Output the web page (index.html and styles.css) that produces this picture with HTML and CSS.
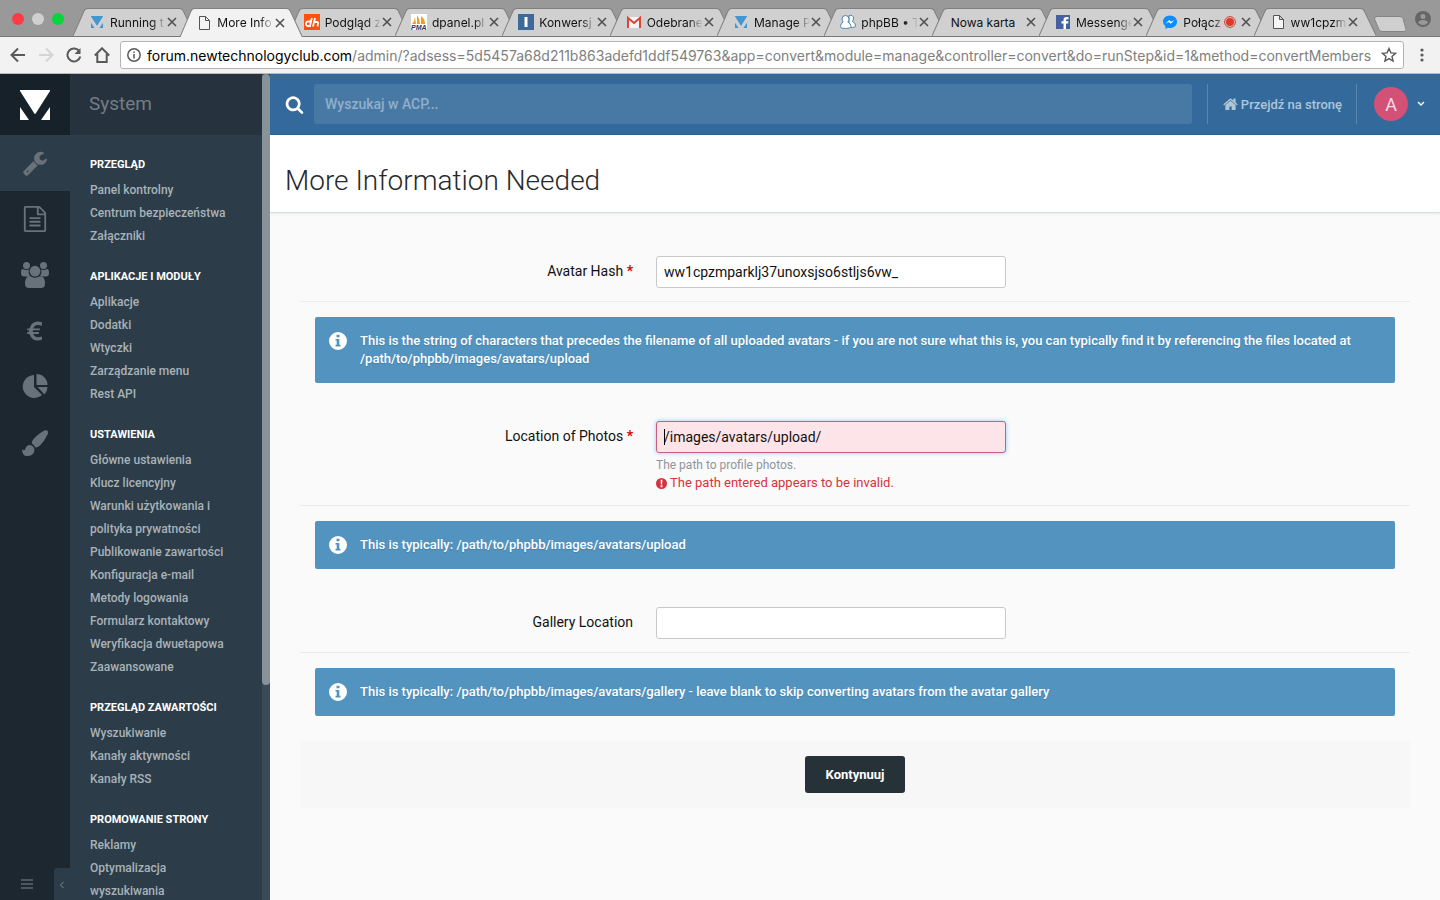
FILE: index.html
```html
<!DOCTYPE html>
<html lang="pl">
<head>
    <meta charset="UTF-8">
    <meta name="viewport" content="width=device-width, initial-scale=1.0">
    <title>More Information Needed</title>
    <link rel="stylesheet" href="styles.css">
</head>
<body>
    <!-- shared shapes -->
    <svg class="defs" aria-hidden="true">
        <symbol id="tab-shape" viewBox="0 0 122 28" preserveAspectRatio="none">
            <path d="M0 28L11 3Q12 .5 15 .5H106Q109 .5 110 3L122 28"/>
        </symbol>
        <symbol id="ips" viewBox="0 0 30 30">
            <path d="M0 0h30v1L16 23q-1 2-2 0L0 1zM0 17l9 13H0zM30 17l-9 13h9z"/>
        </symbol>
        <symbol id="page" viewBox="0 0 16 16">
            <path d="M3.500 1.500h6l4 4v9h-10zM9.500 1.500v4h4" fill="#f5f5f5" stroke="#555"/>
        </symbol>
        <symbol id="close" viewBox="0 0 10 10">
            <path d="M1 1l8 8M9 1L1 9" stroke="#505050" stroke-width="1.600" fill="none"/>
        </symbol>
        <symbol id="info" viewBox="0 0 18 18">
            <path fill-rule="evenodd" d="M9 0a9 9 0 1 1 0 18A9 9 0 0 1 9 0zM7.500 2.800v2.400h3V2.800zM6.500 7v1.600h1.200v4.200H6.500v1.700h5v-1.700h-1.200V7z"/>
        </symbol>
    </svg>

    <header class="browser">
        <div class="tabstrip">
            <div class="lights"><i class="red"></i><i class="grey"></i><i class="green"></i></div>
            <div class="tabs">
                <div class="tab"><svg class="shape"><use href="#tab-shape"/></svg><svg class="fav small"><use href="#ips" fill="#4296d2"/></svg><span>Running t</span><svg class="x"><use href="#close"/></svg></div>
                <div class="tab active"><svg class="shape"><use href="#tab-shape"/></svg><svg class="fav"><use href="#page"/></svg><span>More Info</span><svg class="x"><use href="#close"/></svg></div>
                <div class="tab"><svg class="shape"><use href="#tab-shape"/></svg><svg class="fav" viewBox="0 0 16 16"><path fill="#ff5010" d="M0 0h16v16H0z"/><path d="M6.500 7.500H3.800Q2.300 7.500 2 9.500T3.500 12H6L7.800 4M9 12.500L11 4M10 8h3q1.500 0 1 2l-.6 2.500" fill="none" stroke="#fff" stroke-width="1.800"/></svg><span>Podgląd z</span><svg class="x"><use href="#close"/></svg></div>
                <div class="tab"><svg class="shape"><use href="#tab-shape"/></svg><svg class="fav" viewBox="0 0 16 16"><path fill="#fff" d="M0 0h16v16H0z"/><path fill="#f49b1b" d="M1 10Q4 7 4 3l1 7zM6 10V1q3 4 3 9zM10 10V2q4 3 4 8z"/><text x="0" y="16" class="pma">PMA</text></svg><span>dpanel.pl</span><svg class="x"><use href="#close"/></svg></div>
                <div class="tab"><svg class="shape"><use href="#tab-shape"/></svg><svg class="fav" viewBox="0 0 16 16"><path fill="#3d6a98" d="M0 0h16v16H0z"/><path fill="#fff" d="M6.500 3h3v10h-3z"/></svg><span>Konwersj</span><svg class="x"><use href="#close"/></svg></div>
                <div class="tab"><svg class="shape"><use href="#tab-shape"/></svg><svg class="fav" viewBox="0 0 16 16"><path fill="#f4f4f4" d="M1 3h14v11H1z"/><path fill="none" stroke="#dc4437" stroke-width="2" d="M2 14V4l6 5 6-5v10"/></svg><span>Odebrane</span><svg class="x"><use href="#close"/></svg></div>
                <div class="tab"><svg class="shape"><use href="#tab-shape"/></svg><svg class="fav small"><use href="#ips" fill="#4296d2"/></svg><span>Manage P</span><svg class="x"><use href="#close"/></svg></div>
                <div class="tab"><svg class="shape"><use href="#tab-shape"/></svg><svg class="fav" viewBox="0 0 16 16"><g fill="#fff" stroke="#4c86a8"><path d="M9 1.500q4-1 4.500 2.500 0 2-1 3.500 3 1 3 4.500 0 1.500-3 1.500H9z"/><path d="M5.500 1.500Q9 1.500 9 5q0 2-1.200 3 3.200 1.500 3.200 4.500 0 2-5.500 2t-5-2Q.5 9.500 3.200 8 2 7 2 5q0-3.500 3.500-3.500z"/></g></svg><span>phpBB • T</span><svg class="x"><use href="#close"/></svg></div>
                <div class="tab"><svg class="shape"><use href="#tab-shape"/></svg><span>Nowa karta</span><svg class="x"><use href="#close"/></svg></div>
                <div class="tab"><svg class="shape"><use href="#tab-shape"/></svg><svg class="fav" viewBox="0 0 16 16"><path fill="#4460a0" d="M1 1h14v14H1z"/><path fill="#fff" d="M8.500 15V9.500h-2V7.300h2V6q0-3 3-3h2v2.200h-1.200q-1.300 0-1.300 1.200v.9h2.500l-.4 2.200H11V15z"/></svg><span>Messenge</span><svg class="x"><use href="#close"/></svg></div>
                <div class="tab"><svg class="shape"><use href="#tab-shape"/></svg><svg class="fav" viewBox="0 0 16 16"><path fill="#0a8dff" d="M8 1.500c4 0 7 2.800 7 6.200s-3 6.300-7 6.300q-1 0-2-.3L3.500 15v-2.500Q1 10.800 1 7.700C1 4.300 4 1.500 8 1.500z"/><path fill="#fff" d="M3.500 9.700L7.200 6l2 1.800 3.300-1.800L8.800 9.800 6.900 8z"/></svg><span>Połącz</span><svg class="rec" viewBox="0 0 12 12"><circle cx="6" cy="6" r="5.400" fill="none" stroke="#e0392b"/><circle cx="6" cy="6" r="4" fill="#e0392b"/></svg><svg class="x"><use href="#close"/></svg></div>
                <div class="tab"><svg class="shape"><use href="#tab-shape"/></svg><svg class="fav"><use href="#page"/></svg><span>ww1cpzm</span><svg class="x"><use href="#close"/></svg></div>
            </div>
            <svg class="newtab" viewBox="0 0 32 16"><path d="M3 .5h23q2 0 3 2l3 11q0 2-2 2H8q-2 0-3-2L.5 3Q.5.5 3 .5z" fill="#cfcfcf" stroke="#858585"/></svg>
            <svg class="profile" viewBox="0 0 16 16"><circle cx="8" cy="8" r="8" fill="#666"/><circle cx="8" cy="5.500" r="2.500" fill="#999"/><path d="M3 11.500q1-2.500 5-2.500t5 2.500Q11 14 8 14t-5-2.500z" fill="#999"/></svg>
        </div>
        <div class="toolbar">
            <svg class="nav" viewBox="0 0 16 16"><path d="M15 8H2M8 1.500L1.500 8 8 14.500"/></svg>
            <svg class="nav off" viewBox="0 0 16 16"><path d="M1 8h13M8 1.500L14.500 8 8 14.500"/></svg>
            <svg class="nav" viewBox="0 0 16 16"><path d="M13.500 4.500A6.500 6.500 0 1 0 14.300 9.500"/><path d="M14.500 1v6h-6z" fill="#5a5a5a" stroke="none"/></svg>
            <svg class="nav" viewBox="0 0 16 16"><path d="M.8 8.500L8 1.300l7.200 7.200M3.300 7v8h9.400V7"/></svg>
            <div class="address">
                <svg class="site" viewBox="0 0 14 14"><circle cx="7" cy="7" r="6.200"/><path d="M7 6v4.500M7 3.500V5"/></svg>
                <span class="url"><b>forum.newtechnologyclub.com</b>/admin/?adsess=5d5457a68d211b863adefd1ddf549763&amp;app=convert&amp;module=manage&amp;controller=convert&amp;do=runStep&amp;id=1&amp;method=convertMembers</span>
                <svg class="star" viewBox="0 0 16 16"><path d="M8 1.500l1.900 4.400 4.700.4-3.600 3.100 1.100 4.700L8 11.600l-4.100 2.500L5 9.400 1.400 6.300l4.700-.4z"/></svg>
            </div>
            <svg class="more" viewBox="0 0 4 14"><circle cx="2" cy="2" r="1.600"/><circle cx="2" cy="7" r="1.600"/><circle cx="2" cy="12" r="1.600"/></svg>
        </div>
    </header>

    <div class="app">
        <nav class="rail">
            <a class="logo" href="#" aria-label="ACP"><svg><use href="#ips" fill="#fff"/></svg></a>
            <a class="on" href="#" aria-label="System"><svg viewBox="0 0 1792 1792"><path d="M448 1472q0-26-19-45t-45-19-45 19-19 45 19 45 45 19 45-19 19-45zm644-420l-682 682q-37 37-90 37-52 0-91-37l-106-108q-38-36-38-90 0-53 38-91l681-681q39 98 114.500 173.500t173.500 114.500zm634-435q0 39-23 106-47 134-164.500 217.500t-258.500 83.500q-185 0-316.500-131.500t-131.500-316.500 131.500-316.500 316.500-131.500q58 0 121.500 16.500t107.500 46.500q16 11 16 28t-16 28l-293 169v224l193 107q5-3 79-48.500t135.500-81 70.500-35.500q15 0 23.500 10t8.500 25z"/></svg></a>
            <a href="#" aria-label="Zawartość"><svg viewBox="0 0 1792 1792"><path d="M1596 380q28 28 48 76t20 88v1152q0 40-28 68t-68 28h-1344q-40 0-68-28t-28-68v-1600q0-40 28-68t68-28h896q40 0 88 20t76 48zm-444-244v376h376q-10-29-22-41l-313-313q-12-12-41-22zm384 1528v-1024h-416q-40 0-68-28t-28-68v-416h-768v1536h1280zm-1024-864q0-14 9-23t23-9h704q14 0 23 9t9 23v64q0 14-9 23t-23 9h-704q-14 0-23-9t-9-23v-64zm736 224q14 0 23 9t9 23v64q0 14-9 23t-23 9h-704q-14 0-23-9t-9-23v-64q0-14 9-23t23-9h704zm0 256q14 0 23 9t9 23v64q0 14-9 23t-23 9h-704q-14 0-23-9t-9-23v-64q0-14 9-23t23-9h704z"/></svg></a>
            <a href="#" aria-label="Użytkownicy"><svg viewBox="0 0 28 26"><circle cx="5.500" cy="3.500" r="3.500"/><circle cx="22.500" cy="3.500" r="3.500"/><circle cx="14" cy="9.200" r="5.400"/><path d="M0 11q0-4 1.800-4 3.200 1.700 6 .5-.8 4.500 1.700 7H3q-3 0-3-3.500zM28 11q0-4-1.800-4-3.200 1.700-6 .5.8 4.500-1.700 7H25q3 0 3-3.500zM4 22q0-8 5-8 5 3.500 10 0 5 0 5 8 0 4-4 4H8q-4 0-4-4z"/></svg></a>
            <a href="#" aria-label="Commerce"><svg viewBox="-3 -1 30 30"><path d="M20 4v4q-8-3-10 3h8l-.6 2.200H9.500v2h7.300l-.6 2.200H10q2.500 5.600 10 3v3.800q-11 3.300-14.300-6.800H3v-2.200h2.200v-2H3V11h2.700Q9 .6 20 4z"/></svg></a>
            <a href="#" aria-label="Statystyki"><svg viewBox="0 0 26 26"><path d="M12 1v12l8 8A11.500 11.500 0 1 1 12 1zM14.500 0A11 11 0 0 1 25.500 11h-11zM15.500 13h10q0 4-3 7.500z"/></svg></a>
            <a href="#" aria-label="Wygląd"><svg viewBox="0 0 26 26"><path d="M25 .4q2 1 .5 4-3 6.500-7.500 11-2 2-4.600 2-1.500-3-3.600-4 0-2.500 2.200-4.800Q18 2.500 22.500.6 24-.2 25 .4zM7.500 15q4.500.5 5 5-.7 6-7.500 6-5 0-5-6.800 2.500 1.800 3 .3Q4.500 15 7.500 15z"/></svg></a>
            <div class="rail-foot">
                <svg class="bars" viewBox="0 0 12 10"><path d="M0 1h12M0 5h12M0 9h12"/></svg>
                <button type="button" class="collapse" aria-label="Zwiń"><svg viewBox="0 0 6 8"><path d="M4.500 1l-3 3 3 3"/></svg></button>
            </div>
        </nav>

        <aside class="menu">
            <h2>System</h2>
            <section>
                <h3>Przegląd</h3>
                <a href="#">Panel kontrolny</a>
                <a href="#">Centrum bezpieczeństwa</a>
                <a href="#">Załączniki</a>
            </section>
            <section>
                <h3>Aplikacje i moduły</h3>
                <a href="#">Aplikacje</a>
                <a href="#">Dodatki</a>
                <a href="#">Wtyczki</a>
                <a href="#">Zarządzanie menu</a>
                <a href="#">Rest API</a>
            </section>
            <section>
                <h3>Ustawienia</h3>
                <a href="#">Główne ustawienia</a>
                <a href="#">Klucz licencyjny</a>
                <a href="#">Warunki użytkowania i polityka prywatności</a>
                <a href="#">Publikowanie zawartości</a>
                <a href="#">Konfiguracja e-mail</a>
                <a href="#">Metody logowania</a>
                <a href="#">Formularz kontaktowy</a>
                <a href="#">Weryfikacja dwuetapowa</a>
                <a href="#">Zaawansowane</a>
            </section>
            <section>
                <h3>Przegląd zawartości</h3>
                <a href="#">Wyszukiwanie</a>
                <a href="#">Kanały aktywności</a>
                <a href="#">Kanały RSS</a>
            </section>
            <section>
                <h3>Promowanie strony</h3>
                <a href="#">Reklamy</a>
                <a href="#">Optymalizacja wyszukiwania</a>
            </section>
            <div class="scroll"><div class="thumb"></div></div>
        </aside>

        <main>
            <div class="topbar">
                <label for="search" aria-label="Szukaj"><svg viewBox="0 0 1792 1792"><path d="M1216 832q0-185-131.500-316.500t-316.500-131.500-316.500 131.500-131.500 316.500 131.500 316.500 316.500 131.500 316.500-131.500 131.500-316.500zm512 832q0 52-38 90t-90 38q-54 0-90-38l-343-342q-179 124-399 124-143 0-273.500-55.500t-225-150-150-225-55.500-273.500 55.500-273.500 150-225 225-150 273.500-55.500 273.500 55.500 225 150 150 225 55.500 273.500q0 220-124 399l343 343q37 37 37 90z"/></svg></label>
                <input type="text" id="search" placeholder="Wyszukaj w ACP...">
                <a class="site-link" href="#"><svg viewBox="64 192 1664 1344"><path d="M1472 992v480q0 26-19 45t-45 19h-384v-384h-256v384h-384q-26 0-45-19t-19-45v-480q0-1 .5-3t.5-3l575-474 575 474q1 2 1 6zm223-69l-62 74q-8 9-21 11h-3q-13 0-21-7l-692-577-692 577q-12 8-24 7-13-2-21-11l-62-74q-8-10-7-23.500t11-21.500l719-599q32-26 76-26t76 26l244 204v-195q0-14 9-23t23-9h192q14 0 23 9t9 23v408l219 182q10 8 11 21.500t-7 23.500z"/></svg>Przejdź na stronę</a>
                <a class="user" href="#"><span class="avatar">A</span><svg viewBox="0 0 8 6"><path d="M1 1l3 3 3-3"/></svg></a>
            </div>
            <div class="page-title"><h1>More Information Needed</h1></div>

            <form>
                <div class="row">
                    <label for="hash">Avatar Hash <em>*</em></label>
                    <div class="field"><input type="text" id="hash" value="ww1cpzmparklj37unoxsjso6stljs6vw_"></div>
                </div>
                <div class="message">
                    <svg><use href="#info"/></svg>
                    <p>This is the string of characters that precedes the filename of all uploaded avatars - if you are not sure what this is, you can typically find it by referencing the files located at /path/to/phpbb/images/avatars/upload</p>
                </div>
                <div class="row">
                    <label for="photos">Location of Photos <em>*</em></label>
                    <div class="field">
                        <input type="text" id="photos" class="invalid" value="/images/avatars/upload/">
                        <p class="hint">The path to profile photos.</p>
                        <p class="error"><svg viewBox="0 0 12 12"><path fill-rule="evenodd" d="M6 0a6 6 0 1 1 0 12A6 6 0 0 1 6 0zM5 2l.3 5h1.400L7 2zM5 8v2h2V8z"/></svg>The path entered appears to be invalid.</p>
                    </div>
                </div>
                <div class="message">
                    <svg><use href="#info"/></svg>
                    <p>This is typically: /path/to/phpbb/images/avatars/upload</p>
                </div>
                <div class="row">
                    <label for="gallery">Gallery Location</label>
                    <div class="field"><input type="text" id="gallery"></div>
                </div>
                <div class="message">
                    <svg><use href="#info"/></svg>
                    <p>This is typically: /path/to/phpbb/images/avatars/gallery - leave blank to skip converting avatars from the avatar gallery</p>
                </div>
                <div class="submit"><button type="submit">Kontynuuj</button></div>
            </form>
        </main>
    </div>
</body>
</html>
```

FILE: styles.css
```css
* {
    box-sizing: border-box;
}
body {
    margin: 0;
    height: 100vh;
    display: flex;
    flex-direction: column;
    overflow: hidden;
    font-family: Roboto, "Liberation Sans", sans-serif;
    font-size: 14px;
    color: #111;
    background: #fafafa;
}
h1, h2, h3, p {
    margin: 0;
}
a {
    text-decoration: none;
}
svg {
    flex: none;
}
.defs {
    position: absolute;
    width: 0;
    height: 0;
}

/* browser window */
.browser {
    flex: none;
    font-family: Inter, sans-serif;
    border-bottom: 1px solid #b8b8b8;
}
.tabstrip {
    display: flex;
    align-items: flex-end;
    height: 37px;
    padding: 0 9px 0 12px;
    background: #999;
    border-bottom: 1px solid #777;
}
.lights {
    flex: none;
    display: flex;
    gap: 8px;
    width: 61px;
    padding-bottom: 11px;
}
.lights i {
    width: 12px;
    height: 12px;
    border-radius: 50%;
}
.red {
    background: #fc3c44;
}
.grey {
    background: #d0d0d0;
}
.green {
    background: #07d53c;
}
.tabs {
    flex: 1;
    min-width: 0;
    display: flex;
    padding-right: 13px;
}
.tab {
    position: relative;
    flex: 1;
    min-width: 0;
    height: 28px;
    display: flex;
    align-items: center;
    padding: 0 3px 0 16px;
    font-size: 12px;
    color: #111;
    white-space: nowrap;
}
.tab .shape {
    position: absolute;
    left: 0;
    top: 0;
    width: calc(100% + 15px);
    height: 28px;
    fill: #d0d0d0;
    stroke: #808080;
}
.tab.active {
    z-index: 1;
    height: 29px;
    margin-bottom: -1px;
}
.tab.active .shape {
    height: 29px;
    fill: #f2f2f2;
}
.tab > :not(.shape) {
    position: relative;
}
.tab span {
    flex: 1;
    min-width: 0;
    margin-left: 5px;
    -webkit-mask-image: linear-gradient(to right, #000 75%, transparent);
    mask-image: linear-gradient(to right, #000 75%, transparent);
}
.tab .shape + span {
    margin-left: 3px;
    -webkit-mask-image: none;
    mask-image: none;
}
.fav {
    width: 16px;
    height: 16px;
}
.fav.small {
    width: 14px;
    height: 12px;
    margin: 0 1px;
}
.pma {
    font: italic bold 7px "Liberation Sans", sans-serif;
    fill: #333366;
}
.x {
    width: 10px;
    height: 10px;
    margin-left: 1px;
}
.rec {
    width: 12px;
    height: 12px;
    margin-right: 4px;
}
.newtab {
    width: 32px;
    height: 16px;
    margin-bottom: 4px;
}
.profile {
    width: 16px;
    height: 16px;
    margin: 0 0 9px 9px;
}
.toolbar {
    display: flex;
    align-items: center;
    height: 36px;
    padding: 0 16px 0 10px;
    background: #f2f2f2;
}
.nav {
    width: 16px;
    height: 16px;
    margin-right: 12px;
    fill: none;
    stroke: #5a5a5a;
    stroke-width: 2;
}
.nav.off {
    stroke: #d4d4d4;
}
.address {
    flex: 1;
    min-width: 0;
    display: flex;
    align-items: center;
    height: 28px;
    margin: 0 16px 0 -2px;
    padding: 0 6px;
    background: #fff;
    border: 1px solid #b4b4b4;
    border-radius: 3px;
}
.site {
    width: 14px;
    height: 14px;
    margin-right: 6px;
    fill: none;
    stroke: #5a5a5a;
    stroke-width: 1.5;
}
.url {
    flex: 1;
    min-width: 0;
    overflow: hidden;
    white-space: nowrap;
    font-size: 14px;
    color: #808080;
}
.url b {
    font-weight: 400;
    color: #000;
}
.star {
    width: 16px;
    height: 16px;
    fill: none;
    stroke: #5a5a5a;
    stroke-width: 1.4;
}
.more {
    width: 4px;
    height: 14px;
    fill: #5a5a5a;
}

/* sidebar */
.app {
    flex: 1;
    min-height: 0;
    display: flex;
}
.rail {
    flex: none;
    width: 70px;
    display: flex;
    flex-direction: column;
    background: #1c2730;
}
.rail > a {
    height: 56px;
    display: flex;
    align-items: center;
    justify-content: center;
}
.rail > a svg {
    width: 28px;
    height: 26px;
    fill: #68727a;
}
.rail > .on {
    background: #2c3d49;
}
.rail > .logo {
    height: 61px;
    background: #17212a;
}
.rail > .logo svg {
    width: 30px;
    height: 30px;
}
.rail-foot {
    margin-top: auto;
    display: flex;
    align-items: center;
    justify-content: space-between;
    padding-left: 21px;
}
.bars {
    width: 12px;
    height: 10px;
    stroke: #4b5861;
    stroke-width: 2;
}
.collapse {
    width: 16px;
    height: 32px;
    padding: 0;
    border: 0;
    border-radius: 3px 0 0 0;
    background: #2c3d49;
}
.collapse svg {
    width: 6px;
    height: 8px;
    fill: none;
    stroke: #7c8790;
}
.menu {
    position: relative;
    flex: none;
    width: 200px;
    overflow: hidden;
    background: #2c3d49;
    color: #fff;
}
.menu h2 {
    height: 61px;
    margin-bottom: 1px;
    padding-left: 19px;
    font-size: 19px;
    font-weight: 400;
    line-height: 60px;
    color: #737d85;
    background: #26333e;
}
.menu section {
    padding: 21px 40px 0 20px;
}
.menu h3 {
    margin-bottom: 6px;
    font-size: 11px;
    font-weight: 700;
    line-height: 16px;
    text-transform: uppercase;
}
.menu a {
    display: block;
    font-size: 12px;
    font-weight: 500;
    line-height: 23px;
    color: #a9b2b8;
}
.scroll {
    position: absolute;
    top: 0;
    right: 0;
    width: 8px;
    height: 100%;
    background: #3a4a56;
}
.thumb {
    height: 74%;
    border-radius: 4px;
    background: #879299;
}

/* content */
main {
    flex: 1;
    min-width: 0;
}
.topbar {
    display: flex;
    align-items: center;
    height: 61px;
    padding: 0 15px;
    background: #34699b;
    border-bottom: 1px solid #2b6094;
}
.topbar label svg {
    display: block;
    width: 19px;
    height: 19px;
    margin-right: 10px;
    fill: #fff;
}
.topbar input {
    flex: 1;
    min-width: 0;
    height: 40px;
    padding: 0 11px;
    border: 0;
    border-radius: 3px;
    background: #4879a5;
    font: 500 14px Roboto, sans-serif;
}
.topbar input::placeholder {
    color: #91afca;
}
.site-link {
    display: flex;
    align-items: center;
    height: 40px;
    margin-left: 15px;
    padding: 0 14px 0 15px;
    border: solid #5a86af;
    border-width: 0 1px;
    font-size: 13px;
    font-weight: 500;
    color: #afc5d9;
}
.site-link svg {
    width: 15px;
    height: 12px;
    margin-right: 3px;
    fill: #afc5d9;
}
.user {
    display: flex;
    align-items: center;
    gap: 9px;
    margin-left: 17px;
}
.avatar {
    width: 34px;
    height: 34px;
    border-radius: 50%;
    background: #d35076;
    color: #f6dfe6;
    font-size: 18px;
    line-height: 36px;
    text-align: center;
}
.user svg {
    width: 8px;
    height: 6px;
    fill: none;
    stroke: #fff;
    stroke-width: 1.4;
}
.page-title {
    height: 78px;
    padding: 0 15px;
    background: #fff;
    border-bottom: 1px solid #d3dbdc;
    box-shadow: 0 1px 3px rgba(0, 0, 0, 0.07);
}
.page-title h1 {
    font-size: 28px;
    font-weight: 300;
    line-height: 92px;
    color: #272a2c;
}
form {
    padding: 20px 30px;
}
.row {
    display: flex;
    padding: 23px 0 13px;
    border-bottom: 1px solid #ebebeb;
}
.row label {
    width: 30%;
    line-height: 30px;
    text-align: right;
}
.row em {
    font-style: normal;
    font-weight: 700;
    color: #d00;
}
.field {
    flex: 1;
    padding-left: 23px;
}
.field input {
    display: block;
    width: 350px;
    max-width: 100%;
    height: 32px;
    padding: 0 7px;
    border: 1px solid #c9c9c9;
    border-radius: 3px;
    background: #fff;
    color: #111;
    font: 14px Roboto, sans-serif;
    outline: none;
}
/* text cursor drawn at the start of the field */
.field .invalid {
    border-color: #c5607e;
    background: linear-gradient(#000, #000) 7px 7px / 1px 16px no-repeat #fde4e8;
    box-shadow: 0 0 4px rgba(82, 168, 236, 0.6);
}
.hint {
    margin-top: 3px;
    font-size: 12px;
    line-height: 18px;
    color: #8f969a;
}
.error {
    display: flex;
    align-items: center;
    font-size: 13px;
    line-height: 18px;
    color: #d6323f;
}
.error svg {
    width: 11px;
    height: 11px;
    margin-right: 3px;
    fill: #d6323f;
}
.message {
    display: flex;
    gap: 13px;
    margin: 15px;
    padding: 15px 14px;
    border-radius: 2px;
    background: #5294bf;
    color: #fff;
    font-size: 13px;
    font-weight: 500;
    line-height: 18px;
    text-shadow: 0 1px 1px rgba(0, 0, 0, 0.15);
}
.message svg {
    width: 18px;
    height: 18px;
    fill: #fff;
}
.submit {
    margin-top: 25px;
    padding: 15px;
    text-align: center;
    background: #f7f7f7;
}
.submit button {
    width: 100px;
    height: 37px;
    border: 0;
    border-radius: 3px;
    background: #263238;
    color: #fff;
    font: 700 13px Roboto, sans-serif;
}
```
